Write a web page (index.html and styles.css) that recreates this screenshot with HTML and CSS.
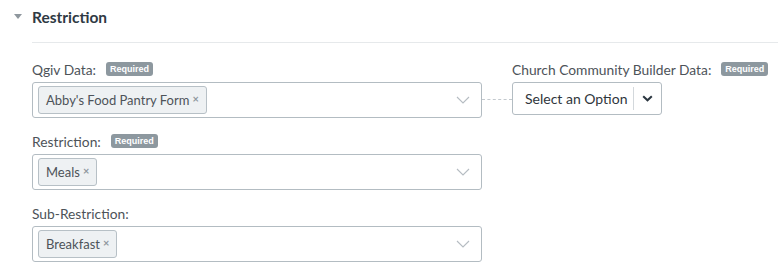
FILE: index.html
```html
<!DOCTYPE html>
<html>
<head>
<meta charset="utf-8">
<link rel="stylesheet" href="styles.css">
</head>
<body>
<div class="section">
  <div class="section-header">
    <span class="caret"></span>
    <h2 class="section-title">Restriction</h2>
  </div>
  <div class="section-body">
    <div class="mapping">
      <div class="left-col">
        <div class="field">
          <div class="label-row"><span class="label">Qgiv Data:</span><span class="badge">Required</span></div>
          <div class="multi-select">
            <span class="tag">Abby's Food Pantry Form<span class="tag-x">×</span></span>
            <svg class="chev" width="14" height="8" viewBox="0 0 14 8"><path d="M1 1 L7 7 L13 1" fill="none" stroke="#b5bcc2" stroke-width="1.1"/></svg>
          </div>
        </div>
        <div class="field">
          <div class="label-row"><span class="label">Restriction:</span><span class="badge">Required</span></div>
          <div class="multi-select">
            <span class="tag">Meals<span class="tag-x">×</span></span>
            <svg class="chev" width="14" height="8" viewBox="0 0 14 8"><path d="M1 1 L7 7 L13 1" fill="none" stroke="#b5bcc2" stroke-width="1.1"/></svg>
          </div>
        </div>
        <div class="field">
          <div class="label-row"><span class="label">Sub-Restriction:</span></div>
          <div class="multi-select">
            <span class="tag">Breakfast<span class="tag-x">×</span></span>
            <svg class="chev" width="14" height="8" viewBox="0 0 14 8"><path d="M1 1 L7 7 L13 1" fill="none" stroke="#b5bcc2" stroke-width="1.1"/></svg>
          </div>
        </div>
      </div>
      <div class="connector"></div>
      <div class="right-col">
        <div class="label-row"><span class="label">Church Community Builder Data:</span><span class="badge">Required</span></div>
        <div class="dropdown">
          <span class="dropdown-text">Select an Option</span>
          <span class="dropdown-btn">
            <svg width="11" height="7" viewBox="0 0 11 7"><path d="M1.2 1.2 L5.5 5.3 L9.8 1.2" fill="none" stroke="#2b3640" stroke-width="2"/></svg>
          </span>
        </div>
      </div>
    </div>
  </div>
</div>
</body>
</html>
```
FILE: styles.css
```css
* { box-sizing: border-box; }
body {
  margin: 0;
  background: #fff;
  font-family: Lato, "Open Sans", Arial, sans-serif;
  color: #4a4f55;
}
.section { padding: 0 0 0 14px; }
.section-header {
  display: flex;
  align-items: center;
  height: 33px;
  gap: 10px;
}
.caret {
  width: 0; height: 0;
  border-left: 4px solid transparent;
  border-right: 4px solid transparent;
  border-top: 5px solid #8f979e;
}
.section-title {
  margin: 0;
  font-size: 15.5px;
  font-weight: 700;
  color: #2f3a44;
}
.section-body {
  margin-left: 18px;
  border-top: 1px solid #e6e9eb;
  margin-top: 9px;
  padding-top: 16px;
}
.mapping { display: flex; align-items: flex-start; }
.left-col {
  width: 450px;
  display: flex;
  flex-direction: column;
  gap: 13px;
}
.field { display: flex; flex-direction: column; gap: 3px; }
.label-row {
  display: flex;
  align-items: center;
  height: 20px;
  gap: 10px;
}
.label {
  font-size: 13.8px;
  color: #4d5359;
}
.badge {
  background: #8d989f;
  color: #fff;
  font-size: 9px;
  font-weight: 700;
  line-height: 14px;
  padding: 0 4px;
  border-radius: 3px;
  font-family: "Liberation Sans", Arial, sans-serif;
}
.multi-select {
  height: 36px;
  border: 1px solid #b3bcc2;
  border-radius: 3px;
  display: flex;
  align-items: center;
  justify-content: space-between;
  padding: 0 11px 0 5px;
}
.tag {
  height: 28px;
  display: inline-flex;
  align-items: center;
  padding: 0 7px 0 7px;
  background: #eef1f3;
  border: 1px solid #b7c0c6;
  border-radius: 3px;
  font-size: 13px;
  color: #4d5359;
}
.tag-x {
  font-size: 11px;
  font-weight: 700;
  color: #8f979e;
  margin-left: 3px;
  margin-top: -3px;
}
.connector {
  width: 30px;
  margin-top: 40px;
  border-top: 1px dashed #c3c9ce;
}
.right-col { display: flex; flex-direction: column; gap: 3px; }
.dropdown {
  width: 150px;
  height: 33px;
  border: 1px solid #b3bcc2;
  border-radius: 3px;
  display: flex;
  align-items: center;
}
.dropdown-text {
  flex: 1;
  padding-left: 12px;
  font-size: 14px;
  color: #2f363c;
}
.dropdown-btn {
  width: 28px;
  height: 23px;
  border-left: 1px solid #d3d8dc;
  display: flex;
  align-items: center;
  justify-content: center;
}
```
